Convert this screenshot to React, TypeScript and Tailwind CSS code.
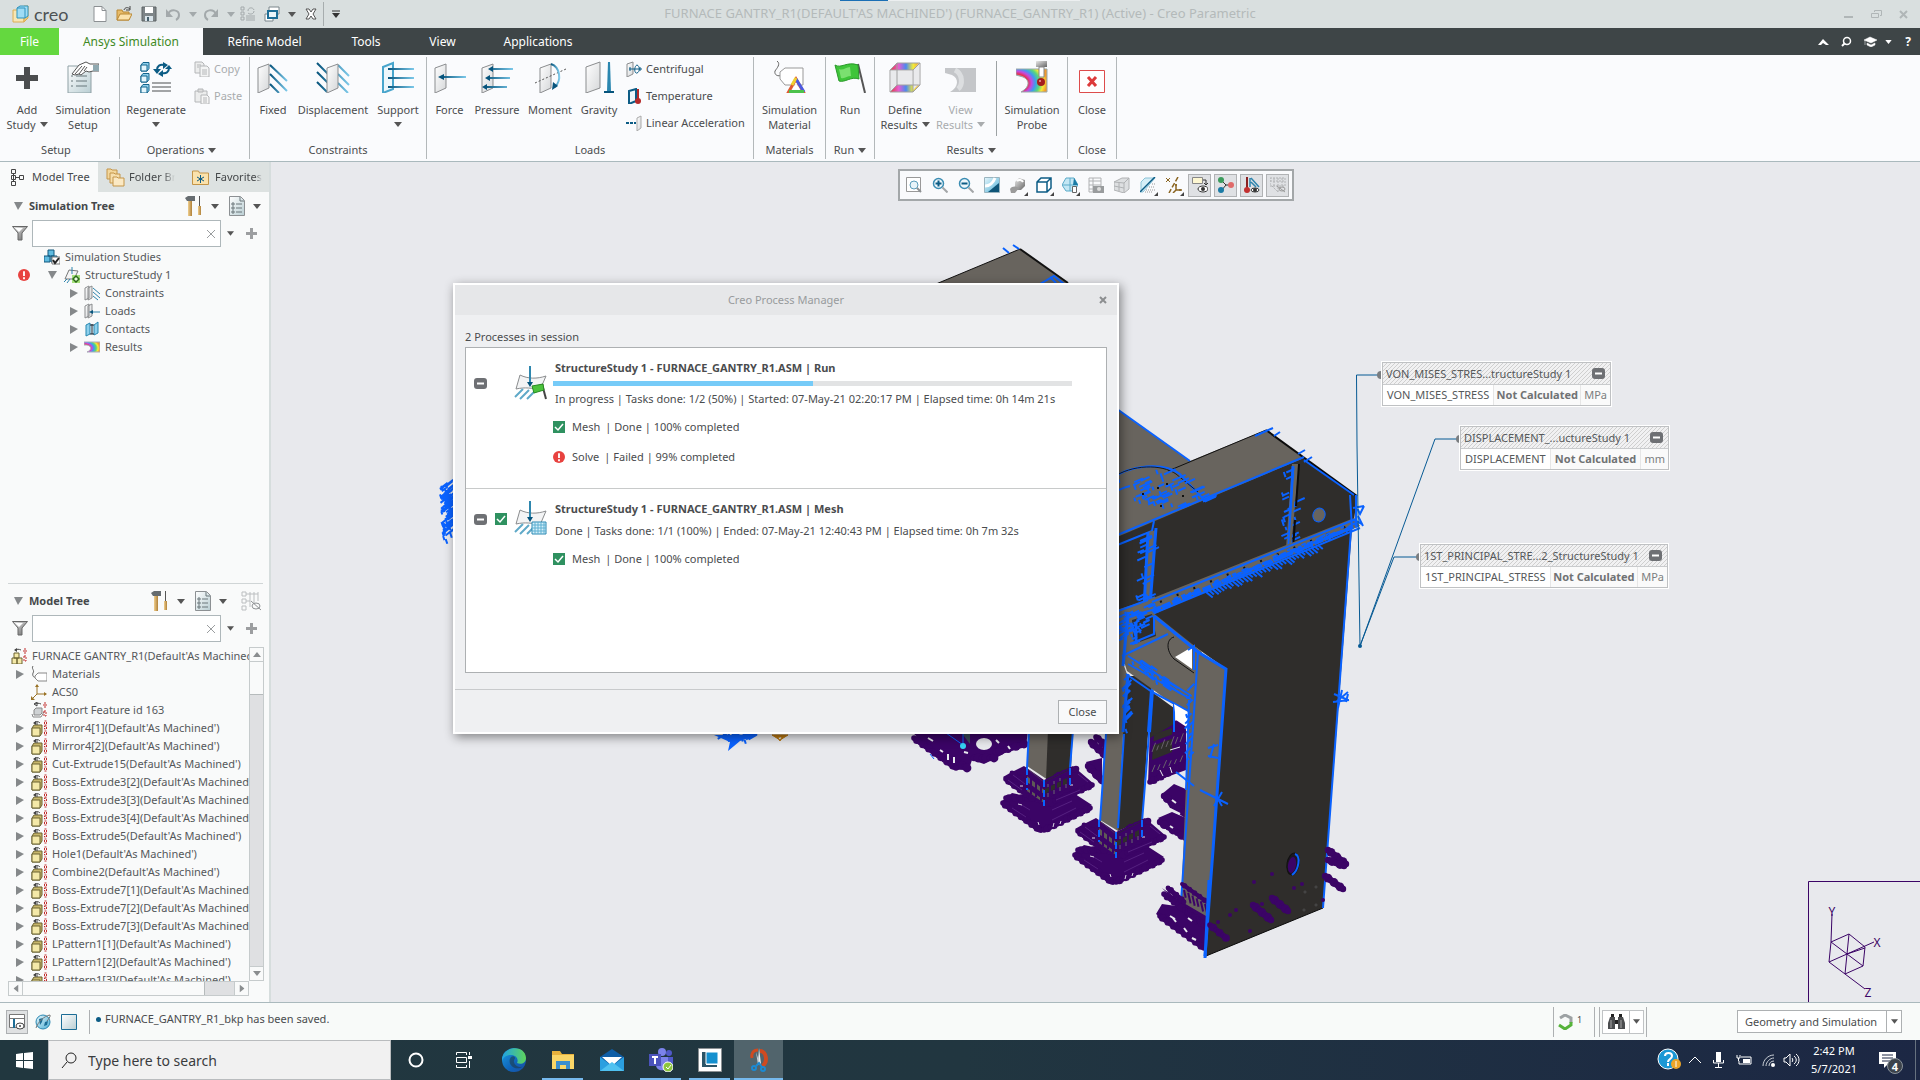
import * as React from "react";

type Pt = [number, number];

const BLUE = "#0a62ff";
const GRAY = "#68645e";
const DARK = "#2f2d2b";
const PURPLE = "#3b0466";

function Icon({ s = 16, w, h, children, className = "" }: any) {
  return (
    <svg
      width={w || s}
      height={h || s}
      viewBox={`0 0 ${w || s} ${h || s}`}
      fill="none"
      className={"shrink-0 " + className}
      aria-hidden="true"
    >
      {children}
    </svg>
  );
}

function Caret({ color = "#555", className = "" }: { color?: string; className?: string }) {
  return (
    <svg width="8" height="5" viewBox="0 0 8 5" className={"inline-block shrink-0 " + className} aria-hidden="true">
      <path d="M0 0h8L4 5z" fill={color} />
    </svg>
  );
}

/* ---------- shared gradients ---------- */

function Defs() {
  return (
    <svg width="0" height="0" className="absolute" aria-hidden="true">
      <defs>
        <linearGradient id="plate" x1="0" y1="0" x2="1" y2="1">
          <stop offset="0" stopColor="#fff" />
          <stop offset="1" stopColor="#d5d7d9" />
        </linearGradient>
        <linearGradient id="doc" x1="0" y1="0" x2="1" y2="1">
          <stop offset="0" stopColor="#fff" />
          <stop offset="1" stopColor="#b9ced3" />
        </linearGradient>
        <linearGradient id="ray" x1="0" y1="0" x2="1" y2="0">
          <stop offset="0" stopColor="#07547c" />
          <stop offset="1" stopColor="#7cc9ea" />
        </linearGradient>
        <linearGradient id="sky" x1="0" y1="0" x2="1" y2="1">
          <stop offset="0" stopColor="#e6f6fc" />
          <stop offset="1" stopColor="#4fb0d6" />
        </linearGradient>
        <linearGradient id="wood" x1="0" y1="0" x2="1" y2="0">
          <stop offset="0" stopColor="#f0cf8e" />
          <stop offset="1" stopColor="#b0813a" />
        </linearGradient>
        <linearGradient id="metal" x1="0" y1="0" x2="1" y2="1">
          <stop offset="0" stopColor="#e8e8e8" />
          <stop offset="1" stopColor="#666" />
        </linearGradient>
        <linearGradient id="rainbow" x1="0" y1="0" x2="1" y2="0">
          <stop offset="0" stopColor="#e23a3a" />
          <stop offset=".3" stopColor="#e65fd0" />
          <stop offset=".55" stopColor="#4a8af0" />
          <stop offset=".8" stopColor="#f3ec3a" />
          <stop offset="1" stopColor="#f0a030" />
        </linearGradient>
        <radialGradient id="fringe" cx="0" cy=".6" r="1">
          <stop offset=".25" stopColor="#7fd6ff" />
          <stop offset=".38" stopColor="#e8304a" />
          <stop offset=".5" stopColor="#c44ae0" />
          <stop offset=".62" stopColor="#3d9bf0" />
          <stop offset=".76" stopColor="#58d77c" />
          <stop offset=".88" stopColor="#f6ea38" />
          <stop offset="1" stopColor="#f39a2e" />
        </radialGradient>
        <linearGradient id="edge" x1="0" y1="0" x2="1" y2="1">
          <stop offset="0" stopColor="#1b9de2" />
          <stop offset=".6" stopColor="#0f62b8" />
          <stop offset="1" stopColor="#1b4fa0" />
        </linearGradient>
        <linearGradient id="edgeTop" x1="0" y1="0" x2="1" y2="0">
          <stop offset="0" stopColor="#1fa2e6" />
          <stop offset="1" stopColor="#5fd45a" />
        </linearGradient>
        <pattern id="hatch" width="4" height="4" patternUnits="userSpaceOnUse">
          <path d="M0 4L4 0" stroke="#cfcfcf" />
        </pattern>
      </defs>
    </svg>
  );
}

/* ---------- ribbon icons, 32px ---------- */

const Plate = ({ x = 0 }: { x?: number }) => (
  <path d={`M${x} 7l11-4v24l-11 5z`} fill="url(#plate)" stroke="#8b8d8f" />
);

const AddIcon = () => (
  <Icon s={32}>
    <path d="M13 6h6v8h8v6h-8v8h-6v-8H5v-6h8z" fill="#4b4d4f" />
  </Icon>
);

const SetupIcon = () => (
  <Icon s={32}>
    <path d="M1 5h23v27H1z" fill="url(#doc)" stroke="#8fa0a5" />
    <path d="M4 15h3M4 20h3M4 25h3" stroke="#67767b" strokeDasharray="2 1" />
    <path d="M9 15h11M9 20h11M9 25h11" stroke="#67767b" />
    <path d="M5 13l7-9 7-3 4 2h9v7h-6l-4 1-3-1-5 4-2-1-4 1z" fill="#fff" stroke="#555" />
    <path d="M8 13l7-8M12 13l6-8M17 10l3-4" stroke="#555" />
    <path d="M26 4h6v6h-6z" fill="#8fa8b0" />
  </Icon>
);

const Cube = ({ x = 0, y = 0 }: { x?: number; y?: number }) => (
  <g transform={`translate(${x} ${y})`}>
    <path d="M0 3l2-2.500h6v6L6 9H0z" fill="#8fd0ec" stroke="#13648c" />
    <path d="M0 3h6v6H0z" fill="#e4f6fd" stroke="#13648c" />
  </g>
);

const RegenIcon = () => (
  <Icon s={32}>
    <Cube x={1} y={1} />
    <Cube x={1} y={12} />
    <Cube x={1} y={23} />
    <path d="M17 9c0-4 3-6 7-5M29 7c0 4-3 6-7 5" stroke="#0c5c85" strokeWidth="2" />
    <path d="M23 1l5 3-5 4zM23 9v7l-5-3zM13 8h8l-4 5zM25 8h7l-3-4z" fill="#0c5c85" />
    <path d="M12 22h19M12 26h19M12 30h19" stroke="#a2a4a6" strokeWidth="2" />
  </Icon>
);

const FixedIcon = () => (
  <Icon s={32}>
    <Plate x={1} />
    <path d="M13 4l17 16M13 13l17 17M13 23l9 9" stroke="url(#ray)" strokeWidth="2" />
  </Icon>
);

const DisplacementIcon = () => (
  <Icon w={34} h={32}>
    <path d="M1 2l12 12M1 11l12 12M1 21l10 10M22 4l11 11M22 13l11 11M22 22l10 10" stroke="url(#ray)" strokeWidth="2" />
    <Plate x={11} />
  </Icon>
);

const SupportIcon = () => (
  <Icon s={32}>
    <path d="M1 6l10-4v26l-10 4z" fill="#eef7fb" stroke="#48a5cc" strokeWidth="2" />
    <path d="M6 7h26v2H6zM6 16h26v2H6zM6 25h26v2H6z" fill="url(#ray)" />
  </Icon>
);

const ForceIcon = () => (
  <Icon s={32}>
    <Plate x={1} />
    <path d="M7 15h25v2H7z" fill="url(#ray)" />
    <path d="M4 16l6-3v6z" fill="#07547c" />
  </Icon>
);

const PressureIcon = () => (
  <Icon s={32}>
    <Plate x={1} />
    <path d="M10 7h22v2H10zM7 16h22v2H7zM4 25h22v2H4z" fill="url(#ray)" />
    <path d="M7 8l5-3v6zM4 17l5-3v6zM1 26l5-3v6z" fill="#07547c" />
  </Icon>
);

const MomentIcon = () => (
  <Icon w={34} h={32}>
    <Plate x={7} />
    <path d="M2 22L33 8" stroke="#555" strokeDasharray="2 2" />
    <path d="M18 3c9 3 11 16 4 23" stroke="url(#ray)" strokeWidth="2" />
    <path d="M19 29l1-8 5 4z" fill="#07547c" />
  </Icon>
);

const GravityIcon = () => (
  <Icon s={32}>
    <path d="M3 6l14-5v26L3 32z" fill="url(#plate)" stroke="#8b8d8f" />
    <path d="M25 1h2l1 29h-4z" fill="#2b87b0" />
    <path d="M21 30h10v2H21z" fill="#07547c" />
  </Icon>
);

const MaterialIcon = () => (
  <Icon s={32}>
    <path d="M3 0c4 3 0 7-2 10-1 4 3 6 7 4" stroke="#666" />
    <path d="M6 11l5-4h18v17H11l-5-6z" fill="#fff" stroke="#999" />
    <path d="M22 18l-8 14h16z" fill="none" stroke="#e05a30" strokeWidth="3" />
    <path d="M22 18l8 13" stroke="#4a5ae0" strokeWidth="3" />
    <path d="M15 30.500h15" stroke="#4cc24c" strokeWidth="3" />
    <path d="M22 17l-4 7" stroke="#f0d030" strokeWidth="3" />
    <path d="M22 22l-3 6h6z" fill="#fff" />
  </Icon>
);

const RunIcon = () => (
  <Icon s={32}>
    <path d="M24 3l7 29" stroke="#555" strokeWidth="2" />
    <path d="M1 4c6 4 12-4 23 0l1 14c-8-3-14 4-20 2z" fill="#3fc53a" stroke="#2a9a2a" />
    <path d="M5 8c4 2 7-2 11-2l1 9c-4 0-6 3-10 2z" fill="#7be070" />
  </Icon>
);

const DefineIcon = () => (
  <Icon s={32}>
    <path d="M1 9l7-7h22l-6 7z" fill="url(#rainbow)" />
    <path d="M1 31l7-7h22l-6 7z" fill="url(#rainbow)" />
    <path d="M2 10h21v14H8l-6 5zM24 9l6-6v20l-6 6z" fill="#e9eaec" />
    <path d="M1 9h23v22H1zM8 2h23v22H8zM1 9l7-7M24 9l7-7M24 31l7-7M1 31l7-7" stroke="#a0a0a0" />
  </Icon>
);

const ViewIcon = () => (
  <Icon s={32}>
    <path d="M0 7h31v24H5c9-5 9-14 2-17L0 12z" fill="#c4c6c9" />
    <path d="M10 9c8 4 8 15 3 19" stroke="#dcdee0" strokeWidth="5" />
  </Icon>
);

const ProbeIcon = () => (
  <Icon s={32}>
    <path d="M0 8h31v23H5c9-5 9-12 2-15L0 14z" fill="url(#fringe)" stroke="#9aa" />
    <path d="M20 0h11v6H20z" fill="url(#metal)" />
    <path d="M23 6h5v10h-5z" fill="#fff" stroke="#888" />
    <circle cx="25" cy="21" r="4" fill="#a51d1d" />
    <circle cx="24" cy="20" r="1" fill="#f0a0a0" />
  </Icon>
);

const CloseIcon = () => (
  <Icon s={32}>
    <path d="M3.500 9.500h25v22h-25z" fill="#fff" stroke="#dd4c4c" />
    <path d="M12 16l8 9M20 16l-8 9" stroke="#dd3b3b" strokeWidth="3" />
  </Icon>
);

const CopyIcon = () => (
  <Icon>
    <path d="M1 1h7l2 2v9H1z" fill="#eceded" stroke="#b4b6b8" />
    <path d="M6 5h7l2 2v9H6z" fill="#f3f4f4" stroke="#b4b6b8" />
    <path d="M8 9h5M8 11h5M8 13h5M3 4h4M3 6h2" stroke="#b4b6b8" />
  </Icon>
);

const PasteIcon = () => (
  <Icon>
    <path d="M1 3h12v11H1z" fill="#eceded" stroke="#b4b6b8" />
    <path d="M4 1h5v3H4z" fill="#ddd" stroke="#b4b6b8" />
    <path d="M7 7h6l2 2v7H7z" fill="#f6f6f6" stroke="#b4b6b8" />
    <path d="M9 10h4M9 12h4M9 14h4" stroke="#b4b6b8" />
  </Icon>
);

/* ---------- ribbon ---------- */

function RibbonButton({ icon, label, second, caret, className, disabled }: any) {
  return (
    <button
      className={
        "flex h-[83px] shrink-0 flex-col items-center pt-1 leading-[15px] " +
        (disabled ? "text-[#a9acae] " : "text-[#4a4c4e] ") +
        className
      }
    >
      {icon}
      <span className="mt-[9px] whitespace-nowrap">{label}</span>
      <span className="flex h-[15px] items-center gap-1 whitespace-nowrap">
        {second}
        {caret && <Caret color={disabled ? "#a9acae" : "#555"} />}
      </span>
    </button>
  );
}

function Group({ label, caret, children, className = "" }: any) {
  return (
    <div className={"flex shrink-0 flex-col border-r border-[#b3b8ba] " + className}>
      <div className="flex">{children}</div>
      <div className="mt-0.5 flex items-center justify-center gap-1 text-[#4a4c4e]">
        {label}
        {caret && <Caret />}
      </div>
    </div>
  );
}

function Ribbon() {
  return (
    <div className="flex h-[107px] shrink-0 border-b border-[#aab9bd] bg-[#fafbfd] py-0.5 text-[11px] leading-4">
      <Group label="Setup" className="pr-[7px]">
        <RibbonButton icon={<AddIcon />} label="Add" second="Study" caret className="w-[54px]" />
        <RibbonButton icon={<SetupIcon />} label="Simulation" second="Setup" className="w-[58px]" />
      </Group>
      <Group label="Operations" caret className="pr-1.5">
        <RibbonButton icon={<RegenIcon />} label="Regenerate" caret className="w-[72px]" />
        <div className="flex w-[51px] flex-col gap-[11px] pt-1 pl-0.5 text-[#a9acae]">
          <button className="flex items-center gap-1">
            <CopyIcon />
            Copy
          </button>
          <button className="flex items-center gap-1">
            <PasteIcon />
            Paste
          </button>
        </div>
      </Group>
      <Group label="Constraints">
        <RibbonButton icon={<FixedIcon />} label="Fixed" className="w-[46px]" />
        <RibbonButton icon={<DisplacementIcon />} label="Displacement" className="w-[74px]" />
        <RibbonButton icon={<SupportIcon />} label="Support" caret className="w-[56px]" />
      </Group>
      <Group label="Loads">
        <RibbonButton icon={<ForceIcon />} label="Force" className="w-[45px]" />
        <RibbonButton icon={<PressureIcon />} label="Pressure" className="w-[50px]" />
        <RibbonButton icon={<MomentIcon />} label="Moment" className="w-[56px]" />
        <RibbonButton icon={<GravityIcon />} label="Gravity" className="w-[42px]" />
        <div className="flex w-[133px] flex-col gap-[11px] pt-1 pl-1.5 text-[#4a4c4e]">
          <button className="flex items-center gap-1 whitespace-nowrap">
            <Icon>
              <path d="M1 3l6-2v12l-6 3z" fill="url(#plate)" stroke="#8b8d8f" />
              <path d="M3 8h13" stroke="#0c5c85" />
              <path d="M11 4c3 1 3 7 0 8s-3-7 0-8z" stroke="#0c5c85" />
              <path d="M4 6v4M14 6v4" stroke="#0c5c85" />
            </Icon>
            Centrifugal
          </button>
          <button className="flex items-center gap-1 whitespace-nowrap">
            <Icon>
              <path d="M3 3l7-2v12l-7 3z" fill="#eef7fb" stroke="#0c5c85" strokeWidth="2" />
              <path d="M12 1v11" stroke="#b52a2a" strokeWidth="2" />
              <circle cx="12" cy="13" r="3" fill="#b52a2a" />
            </Icon>
            Temperature
          </button>
          <button className="flex items-center gap-1 whitespace-nowrap">
            <Icon>
              <path d="M0 8h3M4 8h3M8 8h2" stroke="#0c5c85" strokeWidth="2" />
              <path d="M11 3l4-2v12l-4 3z" fill="url(#plate)" stroke="#aaa" />
            </Icon>
            Linear Acceleration
          </button>
        </div>
      </Group>
      <Group label="Materials">
        <RibbonButton icon={<MaterialIcon />} label="Simulation" second="Material" className="w-[71px]" />
      </Group>
      <Group label="Run" caret>
        <RibbonButton icon={<RunIcon />} label="Run" className="w-[48px]" />
      </Group>
      <Group label="Results" caret>
        <RibbonButton icon={<DefineIcon />} label="Define" second="Results" caret className="w-[60px]" />
        <RibbonButton icon={<ViewIcon />} label="View" second="Results" caret disabled className="w-[51px]" />
        <div className="my-1 ml-2.5 w-px bg-[#9da2a4]" />
        <RibbonButton icon={<ProbeIcon />} label="Simulation" second="Probe" className="w-[70px]" />
      </Group>
      <Group label="Close">
        <RibbonButton icon={<CloseIcon />} label="Close" className="w-[48px]" />
      </Group>
    </div>
  );
}

/* ---------- title bar ---------- */

function TitleBar() {
  return (
    <header className="relative flex h-7 shrink-0 items-center bg-[#d9dfdf] text-[#b4baba]">
      <div className="absolute top-0 left-1/2 flex -translate-x-[120px]">
        <div className="h-px w-12 bg-[#1a6fb5]" />
        <div className="h-px w-48 bg-[#eceff0]" />
      </div>
      <Icon w={18} h={18} className="ml-3">
        <path d="M1 5h11v12H1z" fill="#f7e6b4" stroke="#dcae55" />
        <path d="M12 17l4-4V1h-4z" fill="#efc878" stroke="#dcae55" />
        <path d="M5 3l3-2h8v10l-3 2H5z" fill="#9fdcf5" stroke="#2f93bd" />
        <path d="M5 3h8v10" stroke="#2f93bd" />
      </Icon>
      <span className="ml-1 w-[42px] font-['Lato'] text-[18px] leading-5 text-[#4d5254]">creo</span>
      <div className="ml-4 flex items-center">
        <button aria-label="New" className="w-[24px]">
          <Icon>
            <path d="M2 .5h8l4 4v11H2z" fill="#fff" stroke="#8c9093" />
            <path d="M10 .5v4h4" stroke="#8c9093" />
          </Icon>
        </button>
        <button aria-label="Open" className="w-[25px]">
          <Icon>
            <path d="M1 14V4h5l1 2h6v8z" fill="#e7bb69" stroke="#b98732" />
            <path d="M1 14l3-6h12l-3 6z" fill="#fbe2ac" stroke="#b98732" />
            <path d="M8 4c1-3 4-3 6-1M14 0v4h-4" stroke="#444" />
          </Icon>
        </button>
        <button aria-label="Save" className="w-[24px]">
          <Icon>
            <path d="M1 1h14v14H1z" fill="#7e8588" stroke="#5d6264" />
            <path d="M4 1h8v6H4z" fill="#fff" />
            <path d="M4 10h8v5H4z" fill="#d9e4ea" />
            <path d="M6 11h2v4H6z" fill="#47606c" />
          </Icon>
        </button>
        <button aria-label="Undo" className="flex w-[38px] items-center gap-2">
          <Icon>
            <path d="M3 8c3-6 11-4 11 1 0 2-1 4-3 5" stroke="#a3a9ab" strokeWidth="2" />
            <path d="M1 3v8h7z" fill="#a3a9ab" />
          </Icon>
          <Caret color="#a3a9ab" />
        </button>
        <button aria-label="Redo" className="flex w-[37px] items-center gap-2">
          <Icon>
            <path d="M13 8C10 2 2 4 2 9c0 2 1 4 3 5" stroke="#a3a9ab" strokeWidth="2" />
            <path d="M15 3v8H8z" fill="#a3a9ab" />
          </Icon>
          <Caret color="#a3a9ab" />
        </button>
        <button aria-label="Regenerate" className="w-[24px]">
          <Icon>
            <path d="M1 1h3v3H1zM1 6h3v3H1zM1 11h3v3H1zM6 10h9M6 12h9M6 14h9M8 5c0-4 5-4 6-1M14 5c0 3-4 4-6 2" stroke="#a3a9ab" />
          </Icon>
        </button>
        <button aria-label="Windows" className="flex w-[41px] items-center gap-2">
          <Icon>
            <path d="M5 1h10v7H5zM1 8h8v7H1z" fill="#fff" stroke="#7b868b" />
            <path d="M4 5h9v7H4z" fill="#e9f5fa" stroke="#1c6d96" strokeWidth="2" />
          </Icon>
          <Caret />
        </button>
        <button aria-label="Close window">
          <Icon s={12}>
            <path d="M1 1h3l2 3 2-3h3L8 6l3 5H8L6 8l-2 3H1l3-5z" fill="#fff" stroke="#555" />
          </Icon>
        </button>
        <div className="ml-1.5 h-6 w-px bg-[#a7adae]" />
        <button aria-label="Customize" className="ml-2">
          <Icon w={8} h={8}>
            <path d="M0 1h8" stroke="#333" />
            <path d="M0 3h8L4 8z" fill="#333" />
          </Icon>
        </button>
      </div>
      <h1 className="absolute left-1/2 -translate-x-1/2 text-[13px] whitespace-nowrap">
        FURNACE GANTRY_R1(DEFAULT'AS MACHINED') (FURNACE_GANTRY_R1) (Active) - Creo Parametric
      </h1>
      <div className="ml-auto flex items-center gap-[17px] pr-3">
        <button aria-label="Minimize">
          <Icon s={10}>
            <path d="M0 8h9" stroke="#b0b6b7" strokeWidth="2" />
          </Icon>
        </button>
        <button aria-label="Restore">
          <Icon s={11}>
            <path d="M3.500 3V1.500h7v5H9M.5 4.500h7v4h-7z" stroke="#b0b6b7" />
          </Icon>
        </button>
        <button aria-label="Exit">
          <Icon s={9}>
            <path d="M1 1l7 7M8 1L1 8" stroke="#b0b6b7" strokeWidth="2" />
          </Icon>
        </button>
      </div>
    </header>
  );
}

function TabBar() {
  return (
    <nav className="flex h-[27px] shrink-0 bg-[#3e4547] text-[12px] text-white">
      <button className="w-[59px] bg-[#64d83f]">File</button>
      <button className="w-[144px] bg-[#fafbfd] text-[#3f8a1f]">Ansys Simulation</button>
      <button className="w-[123px]">Refine Model</button>
      <button className="w-[80px]">Tools</button>
      <button className="w-[73px]">View</button>
      <button className="w-[118px]">Applications</button>
      <div className="ml-auto flex items-center pr-2">
        <button aria-label="Collapse ribbon" className="mr-3">
          <Icon w={11} h={6}>
            <path d="M0 6l5-6 6 6H8L5 4 3 6z" fill="#fff" />
          </Icon>
        </button>
        <button aria-label="Search" className="mr-3">
          <Icon s={11}>
            <circle cx="6" cy="5" r="3.500" stroke="#fff" strokeWidth="1.500" />
            <path d="M4 7l-3 3" stroke="#fff" strokeWidth="2" />
          </Icon>
        </button>
        <button aria-label="Learn" className="mr-3 flex items-center gap-2">
          <Icon w={13} h={11}>
            <path d="M0 4l6-3 7 3-6 3zM3 7l4 2 4-2v2l-4 2-4-2zM1 4v5" fill="#fff" stroke="#fff" strokeWidth=".5" />
          </Icon>
          <Caret color="#fff" className="h-1 w-[7px]" />
        </button>
        <button className="w-2 font-bold">?</button>
      </div>
    </nav>
  );
}

/* ---------- left trees ---------- */

const PartIcon = () => (
  <Icon w={16} h={17}>
    <path d="M1 8l2-3h8v8l-2 3H1z" fill="#c6b56a" stroke="#6a6330" />
    <path d="M1 8h8v8H1z" fill="#f4e9a8" stroke="#6a6330" />
    <path d="M3 3c2-2 4-2 6 0M6 2v3" stroke="#444" />
    <path d="M2 3l3-2v4z" fill="#444" />
    <path d="M13.500 1h2v4h-2zM13.500 6h2v3h-2zM13.500 11h2v4h-2z" stroke="#c22c2c" strokeDasharray="2 1" />
  </Icon>
);

const AsmIcon = () => (
  <Icon>
    <path d="M1 10h5v6H1zM6 10h5v6H6zM3 5h5v5H3z" fill="#f4e9a8" stroke="#6a6330" />
    <path d="M4 2c2-1 4-1 6 0" stroke="#444" />
    <path d="M3 2l3-2v4z" fill="#444" />
    <path d="M13 1h2v4h-2zM13 8h2v5h-2z" stroke="#c22c2c" strokeDasharray="2 1" />
  </Icon>
);

const TagIcon = () => (
  <Icon>
    <path d="M2 0c-2 3 2 4 0 7-1 3 1 5 3 4" stroke="#666" />
    <path d="M4 10l3-3h9v8H7l-3-3z" fill="#fff" stroke="#888" />
  </Icon>
);

const CsysIcon = () => (
  <Icon>
    <path d="M6 1v9h9M6 10l-5 5" stroke="#9a7326" />
    <path d="M4 3l2-3 2 3zM13 8l3 2-3 2zM0 16v-4l4 4z" fill="#9a7326" />
  </Icon>
);

const ImportIcon = () => (
  <Icon>
    <path d="M3 8l2-2h6v5l-2 2H3z" fill="#cfd2d4" stroke="#888" />
    <path d="M1 12l1 3h8l3-5" stroke="#888" />
    <path d="M4 2c2-1 4-1 6 0M3 2l3-2v4z" stroke="#444" />
    <path d="M13 1h2v4h-2zM13 9h2v5h-2z" stroke="#c22c2c" strokeDasharray="2 1" />
  </Icon>
);

const StudiesIcon = () => (
  <Icon>
    <path d="M4 1h6v6H4zM0 7h6v6H0zM7 7h6v6H7z" fill="#5fbbe0" stroke="#11577c" />
    <path d="M8 8h8v7H8z" fill="#fff" stroke="#777" />
    <path d="M9 11l2 3 4-5" stroke="#222" strokeWidth="2" />
  </Icon>
);

const StudyIcon = () => (
  <Icon>
    <path d="M1 12L5 3l9 1-4 8z" fill="#f4f4f4" stroke="#777" />
    <path d="M0 15l3-3M3 16l3-4M8 0v7" stroke="#2f85ad" />
    <path d="M8 8h8v8H8z" fill="#a6e07c" />
    <path d="M12 9l3 3-3 3-3-3z" stroke="#2b6a18" strokeWidth="1.500" fill="#e9f8df" />
  </Icon>
);

const PlatesIcon = ({ kind }: { kind: string }) => (
  <Icon>
    <path d="M1 3l4-2v12l-4 2zM4 3l4-2v12l-4 2z" fill="url(#plate)" stroke="#8b8d8f" />
    {kind === "c" ? (
      <path d="M9 3l7 6M9 7l7 6M9 11l5 4" stroke="#2f85ad" />
    ) : (
      <>
        <path d="M7 9h9" stroke="#2f85ad" />
        <path d="M5 9l4-2v4z" fill="#07547c" />
      </>
    )}
  </Icon>
);

const ContactsIcon = () => (
  <Icon>
    <path d="M2 4l4-2v11l-4 2zM10 4l4-3v11l-4 2z" fill="#8ed0ec" stroke="#2787b0" />
    <path d="M8 3v10M6 4h4M6 13h4" stroke="#123" />
  </Icon>
);

const FringeIcon = () => (
  <Icon>
    <path d="M0 3h16v10H3c5-2 5-6 0-7H0z" fill="url(#fringe)" stroke="#aab" />
  </Icon>
);

const ErrorIcon = ({ s = 12 }: { s?: number }) => (
  <svg width={s} height={s} viewBox="0 0 13 13" className="shrink-0" aria-hidden="true">
    <circle cx="6.500" cy="6.500" r="6.500" fill="#e8423f" />
    <path d="M5.500 2.500h2v5h-2zM5.500 9h2v2h-2z" fill="#fff" />
  </svg>
);

const Arrow = ({ down = false }: { down?: boolean }) =>
  down ? (
    <Icon w={9} h={8}>
      <path d="M0 0h9L4 8z" fill="#85888a" />
    </Icon>
  ) : (
    <Icon w={8} h={9}>
      <path d="M0 0l8 4-8 5z" fill="#85888a" />
    </Icon>
  );

function PanelHeader({ title, extra }: { title: string; extra?: boolean }) {
  return (
    <div className="flex h-[28px] items-center pl-3.5">
      <button className="flex items-center gap-1.5 font-bold text-[#45484a]">
        <Arrow down />
        {title}
      </button>
      <div className="ml-auto flex items-center pr-2">
        <button aria-label="Settings" className="mr-2.5 flex items-center gap-[9px]">
          <Icon w={17} h={20}>
            <path d="M3 5h4v15H3z" fill="url(#wood)" />
            <path d="M0 2l3-2h7v5H2z" fill="#666c70" />
            <path d="M14 0h1v10h-1z" fill="#555" />
            <path d="M13 10h3v9h-3z" fill="url(#wood)" />
          </Icon>
          <Caret />
        </button>
        <button aria-label="Show" className="flex items-center gap-2">
          <Icon w={16} h={20}>
            <path d="M.5.5h11l4 4v15H.5z" fill="url(#doc)" stroke="#8c9093" />
            <path d="M3 7h2v2H3zM3 11h2v2H3zM3 15h2v2H3zM7 8h6M7 12h6M7 16h6M11 1v4h4" stroke="#6b777b" />
          </Icon>
          <Caret />
        </button>
        {extra && (
          <button aria-label="Hide tree" className="ml-3.5">
            <Icon s={20}>
              <path d="M1 1h4v4H1zM1 8h4v4H1zM1 15h4v4H1zM9 1v15M13 1v11M17 1v9M5 10h4M5 3h12" stroke="#bbbec0" />
              <ellipse cx="15" cy="15" rx="4" ry="3" stroke="#8f9295" />
              <path d="M10 10l10 9" stroke="#8f9295" />
            </Icon>
          </button>
        )}
      </div>
    </div>
  );
}

function FilterRow({ name }: { name: string }) {
  return (
    <div className="flex h-[27px] items-center pl-3">
      <Icon w={16} h={15}>
        <path d="M.5.5h15L10 7v7H6V7z" fill="url(#metal)" stroke="#666" />
        <path d="M3 2h8L7 6z" fill="#fff" />
      </Icon>
      <label className="relative ml-1 flex h-full w-[189px]">
        <input aria-label={name} className="w-full border border-[#aeb7ba] bg-white pr-5 pl-1 outline-none" />
        <Icon s={8} className="absolute top-[10px] right-1.5">
          <path d="M0 0l8 8M8 0L0 8" stroke="#9a9d9f" />
        </Icon>
      </label>
      <button aria-label="Filter options" className="ml-1.5 flex">
        <Caret className="w-[7px]" />
      </button>
      <button aria-label="Add filter" className="ml-3">
        <Icon s={11}>
          <path d="M4 0h3v4h4v3H7v4H4V7H0V4h4z" fill="#9c9ea0" />
        </Icon>
      </button>
    </div>
  );
}

const studyChildren = [
  { label: "Constraints", icon: <PlatesIcon kind="c" /> },
  { label: "Loads", icon: <PlatesIcon kind="l" /> },
  { label: "Contacts", icon: <ContactsIcon /> },
  { label: "Results", icon: <FringeIcon /> },
];

const parts = [
  "Mirror4[1](Default'As Machined')",
  "Mirror4[2](Default'As Machined')",
  "Cut-Extrude15(Default'As Machined')",
  "Boss-Extrude3[2](Default'As Machined')",
  "Boss-Extrude3[3](Default'As Machined')",
  "Boss-Extrude3[4](Default'As Machined')",
  "Boss-Extrude5(Default'As Machined')",
  "Hole1(Default'As Machined')",
  "Combine2(Default'As Machined')",
  "Boss-Extrude7[1](Default'As Machined')",
  "Boss-Extrude7[2](Default'As Machined')",
  "Boss-Extrude7[3](Default'As Machined')",
  "LPattern1[1](Default'As Machined')",
  "LPattern1[2](Default'As Machined')",
  "LPattern1[3](Default'As Machined')",
];

function TreeRow({ icon, label, arrow = true }: any) {
  return (
    <li className="flex h-[18px] items-center pl-4 whitespace-nowrap">
      <span className="flex w-[15px] shrink-0">{arrow && <Arrow />}</span>
      {icon}
      <span className="ml-[5px]">{label}</span>
    </li>
  );
}

function Sidebar() {
  return (
    <aside className="flex w-[271px] shrink-0 flex-col border-r-2 border-[#d6dddd] bg-[#f9fafa] text-[11px] leading-[18px] text-[#55585a]">
      <div className="flex h-[30px] shrink-0 overflow-hidden bg-[#dde2e1] text-[#45484a]">
        <button className="flex w-[98px] items-center gap-2 bg-[#f9fafa] pl-2.5">
          <Icon w={14} h={19}>
            <path d="M1.500 1.500h4v4h-4zM1.500 7.500h4v4h-4zM1.500 13.500h4v4h-4zM9.500 7.500h4v4h-4zM5.500 9.500h4M3.500 5.500v8" stroke="#444" />
          </Icon>
          Model Tree
        </button>
        <button className="flex w-[86px] items-center gap-1 overflow-hidden pl-2 whitespace-nowrap">
          <Icon w={19} h={19}>
            <path d="M1 3V1h4l1 1h5v9H1z" fill="#f3d79c" stroke="#c49548" />
            <path d="M4 7V5h4l1 1h5v9H4z" fill="#f6dfae" stroke="#c49548" />
            <path d="M7 11V9h4l1 1h6v8H7z" fill="#fbe9c4" stroke="#c49548" />
          </Icon>
          <span className="w-[46px] overflow-hidden mask-r-from-75%">Folder Browser</span>
        </button>
        <button className="flex items-center gap-1.5 overflow-hidden pl-2 whitespace-nowrap">
          <Icon w={17} h={15}>
            <path d="M.5 14.500V1h6l1 2h9v11.500z" fill="#fbe2ac" stroke="#c49548" />
            <path d="M8.500 5v8M5 7l7 4M12 7l-7 4" stroke="#0c5c85" />
          </Icon>
          <span className="mask-r-from-85%">Favorites</span>
        </button>
      </div>

      <section className="min-h-0 flex-[391_1_0%] overflow-hidden">
        <PanelHeader title="Simulation Tree" />
        <FilterRow name="Filter simulation tree" />
        <ul className="mt-px">
          <li className="flex h-[18px] items-center gap-[5px] pl-11">
            <StudiesIcon />
            Simulation Studies
          </li>
          <li className="flex h-[18px] items-center pl-[18px]">
            <ErrorIcon />
            <span className="mr-[7px] ml-[18px]">
              <Arrow down />
            </span>
            <StudyIcon />
            <span className="ml-[5px]">StructureStudy 1</span>
          </li>
          {studyChildren.map((c) => (
            <li key={c.label} className="flex h-[18px] items-center pl-[70px]">
              <Arrow />
              <span className="mr-[5px] ml-1.5">{c.icon}</span>
              {c.label}
            </li>
          ))}
        </ul>
      </section>

      <section className="flex min-h-0 flex-[419_1_0%] flex-col overflow-hidden">
        <div className="mr-1.5 ml-2 h-px shrink-0 bg-[#d0d5d6]" />
        <div className="shrink-0 pt-[3px]">
          <PanelHeader title="Model Tree" extra />
          <FilterRow name="Filter model tree" />
        </div>
        <div className="mt-[5px] mr-[5px] flex min-h-0 flex-1">
          <ul className="min-w-0 flex-1 overflow-hidden">
            <li className="flex h-[18px] items-center gap-[5px] pl-[11px] whitespace-nowrap">
              <AsmIcon />
              FURNACE GANTRY_R1(Default'As Machined')
            </li>
            <TreeRow icon={<TagIcon />} label="Materials" />
            <TreeRow icon={<CsysIcon />} label="ACS0" arrow={false} />
            <TreeRow icon={<ImportIcon />} label="Import Feature id 163" arrow={false} />
            {parts.map((p) => (
              <TreeRow key={p} icon={<PartIcon />} label={p} />
            ))}
          </ul>
          <div className="flex w-[15px] shrink-0 flex-col border border-[#c6cbcc] bg-[#dfe0e2]">
            <button aria-label="Scroll up" className="flex h-[14px] items-center justify-center border-b border-[#c6cbcc] bg-[#f9fafa]">
              <Caret color="#8a8d8f" className="rotate-180" />
            </button>
            <div className="h-[33px] border-b border-[#b6bbbc] bg-[#f9fafa]" />
            <button aria-label="Scroll down" className="mt-auto flex h-[14px] items-center justify-center border-t border-[#c6cbcc] bg-[#f9fafa]">
              <Caret color="#8a8d8f" />
            </button>
          </div>
        </div>
        <div className="mr-5 mb-1.5 ml-2 flex h-[15px] shrink-0 border border-[#c6cbcc] bg-[#dfe0e2]">
          <button aria-label="Scroll left" className="flex w-[14px] items-center justify-center border-r border-[#c6cbcc] bg-[#f9fafa]">
            <Caret color="#8a8d8f" className="rotate-90" />
          </button>
          <div className="w-[182px] border-r border-[#b6bbbc] bg-[#f9fafa]" />
          <button aria-label="Scroll right" className="ml-auto flex w-[14px] items-center justify-center border-l border-[#c6cbcc] bg-[#f9fafa]">
            <Caret color="#8a8d8f" className="-rotate-90" />
          </button>
        </div>
      </section>
    </aside>
  );
}

/* ---------- 3D model ---------- */

let seed = 7;
function rnd() {
  seed = (seed * 16807) % 2147483647;
  return seed / 2147483647;
}

// short strokes scattered round a segment
function scatter(a: Pt, b: Pt, n: number, spread: number, len: number, slope = -0.45) {
  let d = "";
  for (let i = 0; i < n; i++) {
    const t = rnd();
    const x = a[0] + (b[0] - a[0]) * t + (rnd() - 0.5) * spread;
    const y = a[1] + (b[1] - a[1]) * t + (rnd() - 0.5) * spread * 0.6;
    const l = len * (0.5 + rnd() * 0.5);
    const s = rnd() > 0.25 ? slope : 2;
    const dx = s === 2 ? l * 0.2 : l;
    d += `M${x.toFixed(1)} ${y.toFixed(1)}l${dx.toFixed(1)} ${(s === 2 ? l * 0.6 : l * s).toFixed(1)}`;
  }
  return d;
}

// evenly spaced strokes along a segment
function comb(a: Pt, b: Pt, n: number, dx: number, dy: number) {
  let d = "";
  for (let i = 0; i <= n; i++) {
    const t = i / n;
    const k = 0.6 + rnd() * 0.6;
    d += `M${(a[0] + (b[0] - a[0]) * t).toFixed(1)} ${(a[1] + (b[1] - a[1]) * t).toFixed(1)}l${(dx * k).toFixed(1)} ${(dy * k).toFixed(1)}`;
  }
  return d;
}

const details = {
  arc: scatter([1130, 488], [1170, 500], 46, 36, 10),
  arc2: scatter([1160, 470], [1204, 502], 14, 8, 14),
  rail: comb([1206, 592], [1318, 545], 34, 6, 5),
  rail2: scatter([1150, 612], [1356, 524], 110, 7, 6),
  post: scatter([1287, 468], [1288, 545], 26, 14, 11),
  left: scatter([1144, 540], [1143, 606], 24, 14, 12),
  joint: scatter([1120, 640], [1136, 612], 60, 26, 9),
  beam: scatter([1132, 655], [1170, 688], 34, 12, 9, 0.7),
  side: scatter([1124, 680], [1124, 730], 26, 4, 8, -1),
  leg: scatter([1187, 690], [1187, 770], 16, 5, 7, -1),
  far: scatter([444, 486], [446, 538], 90, 9, 9, -0.8),
  floor: scatter([718, 736], [748, 737], 26, 10, 12, -0.6),
};

function Rollers({ pts, n = 12, w = 6 }: { pts: [Pt, Pt]; n?: number; w?: number }) {
  const [a, b] = pts;
  const dots = [];
  for (let i = 0; i <= n; i++) {
    const t = i / n;
    dots.push(
      <circle key={i} cx={a[0] + (b[0] - a[0]) * t} cy={a[1] + (b[1] - a[1]) * t} r={w * (i % 2 ? 0.55 : 0.4)} />
    );
  }
  return (
    <g fill={PURPLE}>
      <path d={`M${a[0]} ${a[1]}L${b[0]} ${b[1]}`} stroke={PURPLE} strokeWidth={w * 0.75} />
      {dots}
    </g>
  );
}

// pad of constraint glyphs under a leg, origin at the leg's lower corner
function Foot({ x, y }: { x: number; y: number }) {
  return (
    <g transform={`translate(${x} ${y})`}>
      <path d="M-43 22L-32 13-14 17-6 22 10 22 31 14 48 25-3 53z" fill={PURPLE} />
      <path d="M-41-3L-34-7-20-14 0 0 29-14 50 4 46 9 2 26-12 20z" fill={PURPLE} />
      <Rollers pts={[[-41, 23], [-4, 50]]} n={14} w={7} />
      <Rollers pts={[[0, 50], [46, 28]]} n={14} w={7} />
      <Rollers pts={[[-38, 18], [-16, 18]]} n={7} w={7} />
      <Rollers pts={[[-38, -1], [-12, 18]]} n={9} w={7} />
      <Rollers pts={[[4, 24], [48, 5]]} n={12} w={7} />
      <Rollers pts={[[-32, -7], [-10, 8]]} n={8} w={6} />
      <Rollers pts={[[12, -4], [32, -11]]} n={7} w={6} />
      <path d="M-17-12L0 2v21l-17-12z" fill="#5f5a56" />
      <path d="M0 2l26-13V6L0 20z" fill={DARK} />
      <path d="M-20-10L0 6 28-8" stroke={PURPLE} strokeWidth="6" />
      <path d="M-17 5L0 17 28 4" stroke={PURPLE} strokeWidth="5" />
      <path d="M-13-4v18M-8-1v18M-3 3v18M6 0v17M12-3v17M18-6v17M24-8v17" stroke={PURPLE} strokeWidth="2" />
      <path d="M4 13v4M10 10v4M16 7v4M22 4v4M4 4v3M10 1v3M16-2v3" stroke="#6b6570" />
      <path d="M-36 0l14 10M-31-5l12 9M-32 28l14 9M-24 24l10 6M8 30l20-9M8 40l24-12M12 20l24-10M34-6l10 8" stroke="#552080" />
      <path d="M-24 6h3M-26 24l4 1M26 5h3M-6 42l1 3M9 47l1-4M16 44l1-3" stroke="#dcd8e4" strokeWidth="1" />
      <path d="M-17-12V10M0 0v26M26-12v20" stroke={BLUE} strokeWidth="2" strokeDasharray="7 3" />
    </g>
  );
}

function Scene() {
  return (
    <svg
      viewBox="271 162 1649 840"
      preserveAspectRatio="xMinYMin meet"
      className="absolute inset-0 h-full w-full"
      fill="none"
      aria-hidden="true"
    >
      {/* far roof */}
      <path d="M936 284l84-35 48 34-20 20z" fill={GRAY} />
      <path d="M936 284l84-35" stroke="#111" />
      <path d="M1020 249l48 34" stroke="#111" strokeWidth="2" />
      <path d="M1003 248l6 5M1013 245l6 4M1040 284l14-8 10 8M1050 277l6 6" stroke={BLUE} strokeWidth="2" />

      {/* far side marks */}
      <path d={details.far} stroke={BLUE} strokeWidth="2" />
      <path d={details.floor} stroke={BLUE} strokeWidth="2" />
      <path d="M714 735h44l-18 6-12 10 2-9z" fill={BLUE} />
      <path d="M772 735h16l-8 5zM778 738l2 3 2-4" fill="#b9770e" stroke="#b9770e" />

      {/* back feet */}
      <g>
        <path d="M910 730h118l-2 17-14 2-16 9-12 6-12-4-3 9-12 1-20-14z" fill={PURPLE} />
        <Rollers pts={[[914, 738], [956, 768]]} n={14} w={7} />
        <Rollers pts={[[960, 764], [967, 768]]} n={3} w={8} />
        <Rollers pts={[[974, 758], [994, 758]]} n={5} w={8} />
        <Rollers pts={[[996, 752], [1024, 744]]} n={7} w={8} />
        <ellipse cx="984" cy="744" rx="8" ry="6" fill="#e8e9ed" />
        <path d="M928 738l5 3M940 750l3 2M948 754v6M954 757v6M996 740l3 3M1008 746l2 3M964 752l4 1" stroke="#e8e9ed" strokeWidth="2" />
        <path d="M960 731l10 13v-13z" fill="#3a4c58" />
        <path d="M946 733l17 12v-12M930 754l4 5" stroke={BLUE} strokeWidth="1" />
        <circle cx="963" cy="746" r="3" fill="#35d3f2" />
      </g>
      <g>
        <path d="M1150 728l36-10v52l-38 14z" fill={PURPLE} />
        <Rollers pts={[[1150, 782], [1182, 766]]} n={9} w={7} />
        <Rollers pts={[[1158, 730], [1184, 722]]} n={7} w={7} />
        <path d="M1154 734l18-6v24l-20 8z" fill={DARK} />
        <path d="M1152 744l32-12" stroke={PURPLE} strokeWidth="4" />
        <Rollers pts={[[1091, 742], [1104, 754]]} n={5} w={8} />
        <Rollers pts={[[1096, 737], [1106, 746]]} n={5} w={7} />
        <path d="M1086 762l16-4v26l-8-6z" fill={PURPLE} />
        <Rollers pts={[[1088, 766], [1102, 780]]} n={5} w={8} />
        <path d={comb([1152, 752], [1180, 742], 6, 3, -8) + comb([1152, 772], [1180, 762], 5, 3, -7)} stroke="#68606c" />
        <path d="M1170 750l10-3M1160 770l3 6M1170 767l2 6" stroke="#e8e9ed" />
      </g>
      <g>
        <path d="M1162 794l12-10 14 6v30l-18-12z" fill={PURPLE} />
        <Rollers pts={[[1164, 796], [1184, 812]]} n={6} w={8} />
        <path d="M1158 818l14-6 14 6v22z" fill={PURPLE} />
        <Rollers pts={[[1160, 822], [1186, 838]]} n={6} w={8} />
        <path d="M1172 800l4 3M1170 826l3 2M1170 809l10 5" stroke="#e8e9ed" strokeWidth="2" />
      </g>

      {/* legs */}
      <path d="M1029 730h19v50l-21-14z" fill={GRAY} />
      <path d="M1048 730h25l-2 38-25 12z" fill={DARK} />
      <path d="M1029 730l-2 38M1073 730l-3 38" stroke={BLUE} strokeWidth="2" />
      <Foot x={1044} y={780} />
      <path d="M1126 676h26l-10 145-24 10z" fill={DARK} />
      <path d="M1120 655l8 22-5 57-5 97-18-11 6-86z" fill={GRAY} />
      <path d="M1152 692l22 16v16l-24 14z" fill={DARK} />
      <path d="M1106 734l-6 88M1124 734l-6 94M1152 688l-3 46-7 88M1174 702v30" stroke={BLUE} strokeWidth="2" />
      <path d="M1152 690l-3 42" stroke={BLUE} strokeWidth="4" />
      <Foot x={1116} y={832} />

      {/* deck */}
      <path d="M1110 404l80 57 76-31 40 29-187 79z" fill={GRAY} />
      <path d="M1110 404l80 57" stroke={BLUE} strokeWidth="2" />
      <path d="M1168 471l98-41" stroke="#111" />
      <path d="M1110 540l194-82 53 38-4 33-200 85-43 10z" fill={DARK} />
      <path d="M1266 430l91 66" stroke="#0b0b0b" strokeWidth="2" />
      <path d="M1110 538l194-81M1110 548l42-17 2-10M1304 460l50 35" stroke={BLUE} strokeWidth="2" />
      <path d="M1110 480c20-16 54-18 70-6l25 27M1110 496c6-6 12-8 20-10" stroke={BLUE} strokeWidth="2" />
      <path d="M1112 478c20-14 50-14 64-4l22 18" stroke="#1a1a1a" />
      <path d={details.arc} stroke={BLUE} strokeWidth="2" />
      <path d={details.arc2} stroke={BLUE} strokeWidth="2" />
      <path d="M1157 488h2M1166 484h2M1182 496h2M1142 494h2M1160 506h2" stroke="#111" strokeWidth="2" />
      {/* posts */}
      <path d="M1292 464h7l-8 84h-5z" fill={GRAY} />
      <path d={details.post} stroke={BLUE} strokeWidth="2" />
      <path d="M1293 466l-4 80" stroke={BLUE} strokeWidth="3" />
      <path d="M1299 464l-3 42M1295 520l-2 30" stroke="#0b0b0b" strokeWidth="2" />
      <path d="M1296 464l-6 84" stroke={GRAY} strokeWidth="2" />
      <path d="M1255 436l18-8M1274 436l6-4M1298 454l7-4M1304 462l8-5" stroke={BLUE} strokeWidth="2" />
      <ellipse cx="1319" cy="515" rx="6" ry="7" fill={GRAY} stroke={BLUE} strokeWidth="1" transform="rotate(20 1319 515)" />
      <path d="M1148 532l8-2-6 78h-6z" fill={GRAY} />
      <path d="M1148 532l-4 76M1156 528l-6 78" stroke={BLUE} strokeWidth="3" />
      <path d={details.left} stroke={BLUE} strokeWidth="2" />

      {/* tall column */}
      <path d="M1150 615l202-86-29 379-117 48 19-288z" fill={DARK} />
      <path d="M1323 908l-117 48" stroke="#0b0b0b" />
      {/* rail */}
      <path d="M1110 612l38-12 206-82 6 8-206 88-44 14z" fill={GRAY} />
      <path d="M1110 614l38-14M1152 602l204-83M1152 614l208-86M1110 622l42-12" stroke={BLUE} strokeWidth="2" />
      <path d="M1152 611l206-86" stroke={BLUE} strokeWidth="4" strokeDasharray="9 2" />
      <path d="M1160 602l190-77" stroke="#111" strokeDasharray="2 16" strokeWidth="2" />
      <path d={details.rail} stroke={BLUE} strokeWidth="2" />
      <path d={details.rail2} stroke={BLUE} strokeWidth="2" />
      <path d="M1350 495l2 34M1356 495v26M1351 530l-28 378" stroke={BLUE} strokeWidth="2" />
      <path d="M1353 508l11-2M1356 506l4 8 4-8M1354 520l8 4M1358 516l5 10" stroke={BLUE} strokeWidth="2" />
      <path d="M1334 694l14 6M1338 708l4-18M1336 702l12-10M1346 702l2-8M1333 702l16-2" stroke={BLUE} strokeWidth="2" />

      {/* joint and beam */}
      <path d="M1110 620l42-8 50 40-6 30-40-14-46-6z" fill={GRAY} />
      <path d="M1132 620l20-6 4 22-22 8z" fill={DARK} />
      <path d="M1122 655l46-22 31 30v56l-22-12-50-36z" fill={GRAY} />
      <path d="M1175 657l17-10v22z" fill="#fff" />
      <path d="M1174 637c-8 2-8 14 0 22l20 14" stroke="#111" />
      <path d="M1122 656l46-22M1128 664l68 38M1126 674l26 18 46 24M1128 656l70 44M1154 616v18l-24 10" stroke={BLUE} strokeWidth="2" />
      <path d="M1188 650l6-4v24" stroke={BLUE} strokeWidth="2" />
      <path d={details.joint} stroke={BLUE} strokeWidth="2" />
      <path d={details.beam} stroke={BLUE} strokeWidth="2" />
      <path d={details.side} stroke={BLUE} strokeWidth="2" />
      <path d="M1128 612l-5 54M1136 622v22M1128 674l-5 58" stroke={BLUE} strokeWidth="3" />

      {/* near leg */}
      <path d="M1198 652l28 17-20 286-2-34-23-18 8-189z" fill={GRAY} />
      <path d="M1174 704l14 8v16l-12-8z" fill="#fff" />
      <path d="M1154 616l44 36 28 17-13 181-8 106" stroke={BLUE} strokeWidth="3" />
      <path d="M1198 652l-4 60-13 190M1189 700l-3 90" stroke={BLUE} strokeWidth="2" />
      <path d={details.leg} stroke={BLUE} strokeWidth="2" />
      <path d="M1176 772l18 14M1200 790l28 14M1216 796l6 10M1222 792l-8 14M1208 748l10-3M1208 756l10 2M1214 744l-4 14" stroke={BLUE} strokeWidth="2" />

      {/* near foot */}
      <path d="M1156 914l6-10 14 2 30 20-1 25z" fill={PURPLE} />
      <path d="M1162 888l20 14 24 14v16z" fill={PURPLE} />
      <Rollers pts={[[1160, 916], [1204, 948]]} n={16} w={7} />
      <Rollers pts={[[1164, 894], [1206, 926]]} n={12} w={7} />
      <Rollers pts={[[1168, 888], [1184, 902]]} n={6} w={6} />
      <Rollers pts={[[1182, 884], [1207, 902]]} n={10} w={5} />
      <path d={comb([1184, 890], [1205, 904], 5, 2, 9) + comb([1186, 908], [1205, 922], 5, 2, 9)} stroke={PURPLE} strokeWidth="2" />
      <path d="M1170 916l5 3M1184 928l3 4M1192 938l4 2M1176 922l-3-4M1188 918l4 3" stroke="#e8e9ed" strokeWidth="2" />
      <path d="M1209 880l-2 40-2 38" stroke={BLUE} strokeWidth="3" />
      <Rollers pts={[[1210, 925], [1226, 938]]} n={5} w={7} />

      {/* marks on the column */}
      <Rollers pts={[[1253, 905], [1271, 920]]} n={6} w={8} />
      <Rollers pts={[[1272, 898], [1288, 911]]} n={6} w={8} />
      <Rollers pts={[[1328, 850], [1346, 864]]} n={6} w={8} />
      <Rollers pts={[[1328, 860], [1344, 866]]} n={4} w={8} />
      <Rollers pts={[[1325, 876], [1343, 889]]} n={6} w={8} />
      <g fill={PURPLE}>
        {[
          [1254, 882], [1272, 874], [1294, 888], [1230, 915], [1250, 931], [1302, 884], [1262, 904], [1218, 922], [1236, 910], [1323, 900],
        ].map(([x, y]) => (
          <circle key={x + "-" + y} cx={x} cy={y} r="2" />
        ))}
      </g>
      <g fill="#111" stroke="#555">
        <circle cx="1305" cy="892" r="1" />
        <circle cx="1316" cy="887" r="1" />
        <circle cx="1316" cy="905" r="1" />
        <circle cx="1304" cy="910" r="1" />
      </g>
      <ellipse cx="1293" cy="864" rx="6" ry="11" fill="#1d1720" stroke="#111" transform="rotate(10 1293 864)" />
      <path d="M1295 854c6 2 4 16-3 21" stroke={BLUE} strokeWidth="2" />
      <ellipse cx="1292" cy="865" rx="4" ry="8" fill={PURPLE} transform="rotate(10 1292 865)" />

      {/* leaders */}
      <path d="M1382 375h-25.500l.5 70 3 201M1460 439h-25l-75 207M1420 557h-26l-34 89" stroke="#075a94" />
      <circle cx="1360" cy="646" r="2" fill="#075a94" />
      <g fill="#7a7d80">
        <circle cx="1381" cy="375" r="4" />
        <circle cx="1460" cy="439" r="4" />
        <circle cx="1420" cy="557" r="4" />
      </g>

      {/* orientation triad */}
      <g stroke={PURPLE}>
        <path d="M1808.500 1004V881.500h114" />
        <path d="M1831 942l18-8 16 13-2 19-18 8-16-12zM1831 942l32 24M1849 934l-4 40M1829 962l45-20M1847 954l18-6M1831 942l1-28M1845 974l20 15" />
      </g>
      <g fill={PURPLE} fontSize="12" fontFamily="Noto Sans, sans-serif" textAnchor="middle">
        <text x="1832" y="916">Y</text>
        <text x="1877" y="947">X</text>
        <text x="1868" y="997">Z</text>
      </g>
    </svg>
  );
}

/* ---------- viewport overlays ---------- */

const lens = (
  <>
    <circle cx="6.500" cy="6.500" r="5" fill="#eef7fb" stroke="#3b8db3" strokeWidth="1.500" />
    <path d="M10.500 10.500l5 5" stroke="#a3a6a8" strokeWidth="2" />
  </>
);

const tools: { name: string; art: React.ReactNode; on?: boolean; drop?: boolean }[] = [
  {
    name: "Refit",
    art: (
      <>
        <path d="M.5.5h14v14H.5z" fill="#fff" stroke="#999" />
        <circle cx="8" cy="8" r="4" fill="#e8f4f9" stroke="#5b9dbb" />
        <path d="M11 11l4 4" stroke="#8e9193" strokeWidth="2" />
      </>
    ),
  },
  { name: "Zoom in", art: <>{lens}<path d="M3.500 6.500h6M6.500 3.500v6" stroke="#0c5c85" strokeWidth="2" /></> },
  { name: "Zoom out", art: <>{lens}<path d="M3.500 6.500h6" stroke="#0c5c85" strokeWidth="2" /></> },
  {
    name: "Repaint",
    art: (
      <>
        <path d="M.5.5h15v15H.5z" fill="url(#sky)" stroke="#9ab4bf" />
        <path d="M4 15L15 6v9z" fill="#0e5578" />
        <path d="M1 9c5 0 8-3 10-8" stroke="#fff" strokeWidth="3" />
      </>
    ),
  },
  {
    name: "Rendering",
    drop: true,
    art: (
      <>
        <path d="M5 5L9 1l6 2v6l-4 4H5z" fill="url(#metal)" />
        <path d="M0 12c2-3 6-3 9-1l-4 5H1z" fill="#9b9b9b" />
        <path d="M7 4c2-2 5-1 6 1" stroke="#fff" strokeWidth="2" />
      </>
    ),
  },
  {
    name: "Display style",
    drop: true,
    art: <path d="M1 5l4-4h10v10l-4 4H1zM1 5h10v10M11 5l4-4" fill="#fff" stroke="#0c5c85" strokeWidth="1.500" />,
  },
  {
    name: "Saved orientations",
    drop: true,
    art: (
      <>
        <path d="M4 1h8l4 7-4 6H4L0 8z" fill="#c4e7f4" />
        <path d="M4 1h8l4 7-4 6H4L0 8zM0 8h16M8 1v13" stroke="#5aabc9" />
        <path d="M12 1l4 7h-5z" fill="#1b7ba5" />
        <path d="M10.500 9.500h4v6h-4z" fill="#fff" stroke="#666" />
      </>
    ),
  },
  {
    name: "View manager",
    art: (
      <>
        <path d="M1 1h12v14H1zM1 4h12M5 1v14M1 8h12M1 12h12" stroke="#b0b2b4" />
        <path d="M5 9h11v7H5z" fill="#999c9e" />
        <circle cx="11" cy="12" r="2" fill="#ddd" />
      </>
    ),
  },
  {
    name: "Perspective",
    art: (
      <>
        <path d="M0 5l8-4h7v11l-5 4-10-3z" fill="#dddfe1" stroke="#b0b2b4" />
        <path d="M10 6v10M0 5l10 1 5-5M5 5v9M0 9l10 2" stroke="#b0b2b4" />
      </>
    ),
  },
  {
    name: "Section",
    drop: true,
    art: (
      <>
        <path d="M1 5l4-4h10L3 15H1z" fill="#d5eef7" stroke="#8cc3d8" />
        <path d="M0 15L15 0" stroke="#0c5c85" strokeWidth="1.500" />
        <path d="M6 13h9M9 10h6M12 7h3M5 15h8" stroke="#999" strokeDasharray="1 1" />
      </>
    ),
  },
  {
    name: "Datum display",
    drop: true,
    art: (
      <>
        <path d="M0 1l4 4M4 1L0 5" stroke="#8a6420" />
        <path d="M12 0L3 16" stroke="#8a6420" strokeDasharray="5 2" strokeWidth="1.500" />
        <path d="M10 7v6h6M10 13l-3 3M9 8h2M14 12v2" stroke="#8a6420" strokeWidth="1.500" />
      </>
    ),
  },
  {
    name: "Annotation display",
    on: true,
    art: (
      <>
        <path d="M.5.5h10v6H.5z" fill="#fdf7d2" stroke="#888" />
        <path d="M11 3h3v4M12 6l2 2 2-2" stroke="#333" />
        <ellipse cx="11" cy="12" rx="5" ry="3" fill="#fff" stroke="#333" />
        <circle cx="11" cy="12" r="2" fill="#333" />
      </>
    ),
  },
  {
    name: "Simulation display",
    on: true,
    art: (
      <>
        <path d="M3 3l5 5h5M8 8l-5 6" stroke="#333" />
        <circle cx="3" cy="3" r="3" fill="#3c9b5c" />
        <circle cx="13" cy="8" r="3" fill="#e06a6a" />
        <circle cx="3" cy="13" r="3" fill="#1b7ba5" />
      </>
    ),
  },
  {
    name: "Load display",
    on: true,
    art: (
      <>
        <path d="M2 0h2v12H2z" fill="#8a2020" />
        <circle cx="3" cy="13" r="3" fill="#c23030" />
        <path d="M6 1v9M7 1l8 9M7 5l5 5" stroke="#2f85ad" strokeWidth="1.500" />
        <ellipse cx="11" cy="13" rx="4" ry="2" fill="#fff" stroke="#333" />
        <circle cx="11" cy="13" r="2" fill="#333" />
      </>
    ),
  },
  {
    name: "Mesh display",
    on: true,
    art: (
      <>
        <path d="M0 1h15v8H0zM0 4h15M4 1v8M8 1v14M12 1v8M2 9l6 6" stroke="#b0b2b4" strokeDasharray="2 1" />
        <path d="M7 9l8 6" stroke="#999" />
        <ellipse cx="12" cy="12" rx="3" ry="2" stroke="#999" />
      </>
    ),
  },
];

function ViewToolbar() {
  return (
    <div
      role="toolbar"
      className="absolute top-[7px] left-[627px] flex h-[32px] items-center gap-[3px] border-2 border-[#a3a7a9] bg-[#f9fafc] pr-[3px] pl-0.5"
    >
      {tools.map((t) => (
        <button
          key={t.name}
          aria-label={t.name}
          className={
            "relative flex h-[23px] w-[23px] items-center justify-center border " +
            (t.on ? "border-[#b0b2b4] bg-[#dfe1e4]" : "border-transparent")
          }
        >
          <Icon>{t.art}</Icon>
          {t.drop && (
            <span className="absolute right-0 bottom-0 border-r-4 border-t-4 border-r-[#444] border-t-transparent" />
          )}
        </button>
      ))}
    </div>
  );
}

const Collapse = () => (
  <Icon w={13} h={11}>
    <rect width="13" height="11" rx="3" fill="#6e7074" />
    <path d="M3 5.500h7" stroke="#fff" strokeWidth="2" />
  </Icon>
);

const callouts = [
  { title: "VON_MISES_STRES...tructureStudy 1", name: "VON_MISES_STRESS", unit: "MPa", pos: "left-[1111px] top-[200px] w-[229px]" },
  { title: "DISPLACEMENT_...uctureStudy 1", name: "DISPLACEMENT", unit: "mm", pos: "left-[1189px] top-[264px] w-[209px]" },
  { title: "1ST_PRINCIPAL_STRE...2_StructureStudy 1", name: "1ST_PRINCIPAL_STRESS", unit: "MPa", pos: "left-[1149px] top-[382px] w-[248px]" },
];

function Callout({ title, name, unit, pos }: any) {
  return (
    <div className={"absolute border border-[#bfc1c3] bg-white text-[11px] leading-5 whitespace-nowrap text-[#55585a] outline outline-white " + pos}>
      <div className="relative flex h-[22px] items-center border-b border-[#c9cbcd] bg-[#f1f1f2]">
        <svg className="absolute inset-0 h-full w-full" aria-hidden="true">
          <rect width="100%" height="100%" fill="url(#hatch)" />
        </svg>
        <span className="relative pl-[3px]">{title}</span>
        <button aria-label="Collapse" className="relative ml-auto pr-[5px]">
          <Collapse />
        </button>
      </div>
      <div className="flex justify-between">
        <span className="px-1">{name}</span>
        <span className="flex-1 border-l border-[#e6e6e6] bg-[#fafafa] text-center font-bold text-[#707274]">Not Calculated</span>
        <span className="border-l border-[#e6e6e6] bg-[#fafafa] px-[3px] text-[#7c7e80]">{unit}</span>
      </div>
    </div>
  );
}

/* ---------- process manager ---------- */

const CheckBadge = () => (
  <Icon s={12}>
    <path d="M0 0h12v12H0z" fill="#2f9160" />
    <path d="M2 6l3 3 5-6" stroke="#fff" strokeWidth="1.500" />
  </Icon>
);

const StudyBig = ({ mesh }: { mesh?: boolean }) => (
  <Icon w={33} h={34}>
    <path d="M2 23L6 9c8 4 17 4 26 1l-6 14c-8-2-15-3-24-1z" fill="#f3f4f5" stroke="#8b8d8f" />
    <path d="M16 0v18" stroke="#2f87ae" strokeWidth="2" />
    <path d="M13 16h6l-3 5z" fill="#07547c" />
    <path d="M1 31l8-8M6 33l9-9M13 33l9-9" stroke="#5fa9c8" strokeWidth="2" />
    {mesh ? (
      <>
        <path d="M18 21h14v12H18z" fill="#d6f0fa" stroke="#2b88b2" />
        <path d="M18 24h14M18 27h14M18 30h14M21 21v12M24 21v12M27 21v12M30 21v12" stroke="#5fb0d2" />
      </>
    ) : (
      <>
        <path d="M28 18l4 15" stroke="#444" strokeWidth="2" />
        <path d="M18 20l11-2 1 6-10 3z" fill="#4bc23c" stroke="#278a22" />
      </>
    )}
  </Icon>
);

const processes = [
  {
    title: "StructureStudy 1 - FURNACE_GANTRY_R1.ASM | Run",
    info: "In progress | Tasks done: 1/2 (50%) | Started: 07-May-21 02:20:17 PM | Elapsed time: 0h 14m 21s",
    progress: 50,
    tasks: [
      { ok: true, name: "Mesh", state: "Done | 100% completed" },
      { ok: false, name: "Solve", state: "Failed | 99% completed" },
    ],
  },
  {
    title: "StructureStudy 1 - FURNACE_GANTRY_R1.ASM | Mesh",
    info: "Done | Tasks done: 1/1 (100%) | Ended: 07-May-21 12:40:43 PM | Elapsed time: 0h 7m 32s",
    tasks: [{ ok: true, name: "Mesh", state: "Done | 100% completed" }],
  },
];

function ProcessManager() {
  return (
    <div
      role="dialog"
      aria-labelledby="pm-title"
      className="absolute top-[121px] left-[182px] flex h-[451px] w-[666px] flex-col border-2 border-white bg-[#eff0f2] text-[11px] text-[#4a4c4e] shadow-[2px_3px_10px_rgba(0,0,0,0.45)]"
    >
      <div className="relative flex h-[30px] shrink-0 items-center justify-center bg-[#e6e7e9]">
        <h2 id="pm-title" className="text-[#989b9d]">Creo Process Manager</h2>
        <button aria-label="Close dialog" className="absolute right-2.5">
          <Icon s={8}>
            <path d="M1 1l6 6M7 1L1 7" stroke="#8c8e90" strokeWidth="2" />
          </Icon>
        </button>
      </div>
      <p className="mt-3 px-2.5 leading-5">2 Processes in session</p>
      <ul className="mx-2.5 mb-4 flex-1 border border-[#adb0b2] bg-white">
        {processes.map((p, i) => (
          <li key={p.title} className={"flex px-2 pt-3 " + (i === 0 ? "h-[141px] border-b border-[#c8caca]" : "")}>
            <div className="flex w-[79px] shrink-0">
              <span className={"w-[21px] " + (p.progress ? "pt-[18px]" : "pt-[13px]")}>
                <Collapse />
              </span>
              <span className="w-[19px] pt-3">{!p.progress && <CheckBadge />}</span>
              <span className={p.progress ? "pt-1.5" : ""}>
                <StudyBig mesh={!p.progress} />
              </span>
            </div>
            <div className="min-w-0 flex-1 leading-4">
              <h3 className="pl-0.5 font-bold">{p.title}</h3>
              {p.progress && (
                <div className="mt-[5px] mr-[26px] h-[5px] bg-[#e2e3e4]">
                  <div className="h-full bg-[#76cbf8]" style={{ width: p.progress + "%" }} />
                </div>
              )}
              <p className={"pl-0.5 whitespace-nowrap " + (p.progress ? "mt-[5px]" : "mt-1.5")}>{p.info}</p>
              <ul className="mt-3 flex flex-col gap-3.5">
                {p.tasks.map((t) => (
                  <li key={t.name} className="flex items-center">
                    {t.ok ? <CheckBadge /> : <ErrorIcon />}
                    <span className="ml-[7px]">{t.name}</span>
                    <span className="ml-[5px]">| {t.state}</span>
                  </li>
                ))}
              </ul>
            </div>
          </li>
        ))}
      </ul>
      <div className="flex shrink-0 justify-end border-t border-[#c8cacc] px-2.5 pt-2.5 pb-2">
        <button className="h-[24px] w-[49px] border border-[#adb0b2] bg-[#f8f9fa]">Close</button>
      </div>
    </div>
  );
}

/* ---------- bottom bars ---------- */

function StatusBar() {
  return (
    <footer className="flex h-[38px] shrink-0 items-center border-t border-[#aab9bd] bg-[#f8faf9] pl-1.5 text-[11px] text-[#4a4c4e]">
      <button aria-label="Navigator" className="flex h-6 w-[22px] items-center justify-center border border-[#adb0b2] bg-[#dfe1e2]">
        <Icon>
          <path d="M.5.5h15v13H.5zM.5 4.500h15" fill="#fff" stroke="#777" />
          <path d="M5 5v9" stroke="#1c6d96" strokeWidth="2" />
          <ellipse cx="11" cy="12" rx="4" ry="3" fill="#fff" stroke="#444" />
          <circle cx="11" cy="12" r="1" fill="#444" />
        </Icon>
      </button>
      <button aria-label="Browser" className="ml-[7px]">
        <Icon>
          <circle cx="8" cy="8" r="7" fill="url(#sky)" stroke="#2b88b2" />
          <path d="M4 5l4-1-1 4-2 3zM10 8l3-1-1 4-3 1z" fill="#1c6d96" />
          <path d="M1 14C3 8 9 2 15 1c1 1-2 5-3 6" stroke="#777" />
        </Icon>
      </button>
      <button aria-label="Full screen" className="ml-2.5">
        <Icon>
          <path d="M.5.5h15v15H.5z" fill="url(#doc)" stroke="#1c6d96" />
        </Icon>
      </button>
      <div className="ml-3 h-6 w-px bg-[#adb0b2]" />
      <p className="flex items-center gap-1 pb-1 pl-1.5">
        <span className="h-[5px] w-[5px] rounded-full bg-[#0c5c85]" />
        FURNACE_GANTRY_R1_bkp has been saved.
      </p>
      <div className="ml-auto flex h-full items-center pr-[18px]">
        <div className="flex h-[30px] w-[42px] items-center gap-1 border-x border-[#adb0b2] pl-1">
          <Icon w={15} h={16}>
            <path d="M2 4l5-3 6 3v5" stroke="#9da2a4" strokeWidth="3" />
            <path d="M1 11l6 4 6-4V8" stroke="#56b33a" strokeWidth="3" />
          </Icon>
          <span className="pb-1 text-[9px] leading-3">1</span>
        </div>
        <div className="ml-1 flex h-[30px] items-center border-x border-[#adb0b2] px-0.5">
          <div className="flex h-6 border border-[#c0c3c5] bg-white">
            <button aria-label="Find" className="flex w-[27px] items-center justify-center border-r border-[#c0c3c5]">
              <Icon w={17} h={15}>
                <path d="M2 3h5v12H0V9zM10 3h5l2 6v6h-7z" fill="#4b4d4f" />
                <path d="M3 0h3v3H3zM11 0h3v3h-3zM7 6h3v4H7z" fill="#222" />
                <path d="M3 6v8M13 6v8" stroke="#aaa" />
              </Icon>
            </button>
            <button aria-label="Find options" className="flex w-[13px] items-center justify-center">
              <Caret className="w-[7px]" />
            </button>
          </div>
        </div>
        <label className="relative ml-[90px] flex h-[23px] w-[165px] border border-[#adb0b2] bg-white">
          <select aria-label="Selection filter" className="w-full appearance-none bg-transparent pl-[7px] leading-5 outline-none">
            <option>Geometry and Simulation</option>
          </select>
          <span className="pointer-events-none absolute inset-y-0 right-0 flex w-[15px] items-center justify-center border-l border-[#adb0b2]">
            <Caret className="w-[7px]" />
          </span>
        </label>
      </div>
    </footer>
  );
}

const TaskButton = ({ name, children, open, active }: any) => (
  <button
    aria-label={name}
    className={"relative flex h-10 w-[49px] items-center justify-center " + (active ? "bg-[#51646c]" : "")}
  >
    {children}
    {open && (
      <span className={"absolute bottom-0 h-0.5 bg-[#76b9ed] " + (active ? "inset-x-0" : "inset-x-1")} />
    )}
  </button>
);

function Taskbar() {
  return (
    <div className="flex h-10 shrink-0 items-center bg-linear-to-r from-[#21373f] via-[#213640] to-[#1c2744] text-white">
      <button aria-label="Start" className="flex w-12 justify-center">
        <Icon s={17}>
          <path d="M0 2l7-1v7H0zM8 1l9-1v8H8zM0 9h7v7l-7-1zM8 9h9v8l-9-1z" fill="#fff" />
        </Icon>
      </button>
      <label className="flex h-full w-[343px] items-center gap-[11px] border border-[#b9bcbe] bg-[#f1f1f1] pl-3">
        <Icon s={16}>
          <circle cx="10" cy="6" r="5" stroke="#222" />
          <path d="M6 10l-5 6" stroke="#222" />
        </Icon>
        <input
          aria-label="Search"
          placeholder="Type here to search"
          className="w-full bg-transparent text-[14px] outline-none placeholder:text-[#3a3c3e]"
        />
      </label>
      <TaskButton name="Cortana">
        <Icon s={16}>
          <circle cx="8" cy="8" r="6.500" stroke="#fff" strokeWidth="2" />
        </Icon>
      </TaskButton>
      <TaskButton name="Task view">
        <Icon w={17} h={16}>
          <path d="M.5 3V.5h10V3M.5 5.500h10v5H.5zM.5 13v2.500h10V13M13.500 0v3M13.500 9v7" stroke="#fff" />
          <path d="M12 4h4v3h-4z" fill="#fff" />
        </Icon>
      </TaskButton>
      <TaskButton name="Edge">
        <Icon s={24}>
          <circle cx="12" cy="12" r="12" fill="url(#edge)" />
          <path d="M0 11C1-2 23-4 24 10c0 5-5 7-9 5 2-4-1-8-6-8-5 0-8 3-9 6z" fill="url(#edgeTop)" />
          <path d="M9 9c-4 5 1 13 9 11l4-2c-3 2-9 1-10-4-.5-2 1-3 1-4 0-2-3-2-4-1z" fill="#21373f" opacity=".55" />
        </Icon>
      </TaskButton>
      <TaskButton name="File Explorer" open>
        <Icon w={22} h={19}>
          <path d="M0 0h8l2 3h12v15H0z" fill="#e9b23c" />
          <path d="M0 4h22v14H0z" fill="#fbd667" />
          <path d="M4 18v-8h14v8h-4v-4H8v4z" fill="#3d8fce" />
        </Icon>
      </TaskButton>
      <TaskButton name="Mail">
        <Icon s={24}>
          <path d="M0 9l12-8 12 8v14H0z" fill="#0f5ea6" />
          <path d="M2 9h20L12 18z" fill="#fff" />
          <path d="M0 9l12 9 12-9v14H0z" fill="#2b9fe0" />
          <path d="M0 23l12-9 12 9z" fill="#4fc1f0" />
        </Icon>
      </TaskButton>
      <TaskButton name="Teams" open>
        <Icon s={24}>
          <circle cx="13" cy="4" r="4" fill="#7b83eb" />
          <circle cx="20" cy="5" r="3" fill="#5059c9" />
          <path d="M15 9h9v7c0 4-6 5-8 2z" fill="#5059c9" />
          <path d="M7 9h12v8c0 7-12 7-12 0z" fill="#7b83eb" />
          <path d="M0 6h12v12H0z" fill="#4b53bc" />
          <path d="M3 9h6M6 9v7" stroke="#fff" strokeWidth="2" />
          <circle cx="19" cy="19" r="5" fill="#8dc63f" stroke="#fff" />
          <path d="M17 19l2 2 3-4" stroke="#fff" />
        </Icon>
      </TaskButton>
      <TaskButton name="Creo" open>
        <Icon s={24}>
          <path d="M.5.5h23v23H.5z" fill="#fff" stroke="#8c9093" />
          <path d="M4 4h4v15H4zM4 17h15v2H4z" fill="#2c5568" />
          <path d="M8 4h12v12H8z" fill="#1590cf" stroke="#fff" />
        </Icon>
      </TaskButton>
      <TaskButton name="Snip" open active>
        <Icon s={24}>
          <path d="M13 3c7 0 8 12 2 15" stroke="#cf4a20" strokeWidth="4" />
          <path d="M11 2C6 2 4 6 5 10" stroke="#cf4a20" strokeWidth="3" />
          <path d="M12 0l2 16-3-1z" fill="#e8ecee" />
          <path d="M9 4l4 12-2 1z" fill="#c5cdd2" />
          <circle cx="7" cy="20" r="2" stroke="#1b8ad3" strokeWidth="2" />
          <circle cx="16" cy="21" r="2" stroke="#1b8ad3" strokeWidth="2" />
          <path d="M9 18l3-3 3 4" stroke="#1b8ad3" strokeWidth="2" />
        </Icon>
      </TaskButton>
      <div className="ml-auto flex items-center">
        <Icon s={24} className="mr-2">
          <circle cx="11" cy="11" r="10" fill="#1b98d5" stroke="#fff" />
          <path d="M8 8c0-4 7-4 7 0 0 3-4 3-4 6M11 15v3" stroke="#fff" strokeWidth="2" />
          <circle cx="19" cy="16" r="5" fill="#eda528" />
          <path d="M19 13v6" stroke="#fff" />
        </Icon>
        <Icon w={12} h={8} className="mr-3">
          <path d="M0 7l6-6 6 6" stroke="#fff" />
        </Icon>
        <Icon w={11} h={16} className="mr-3">
          <path d="M3 0h5v10H3z" fill="#fff" />
          <path d="M.5 8v3h10V8M5.500 11v4M2 15.500h7" stroke="#fff" />
        </Icon>
        <Icon w={16} h={12} className="mr-2.5">
          <path d="M5 3h10v7H3V7" stroke="#fff" />
          <path d="M7 5h7v4H7z" fill="#fff" />
          <path d="M1 1v3h3V1M2.500 4v3" stroke="#fff" />
        </Icon>
        <Icon w={13} h={13} className="mr-2">
          <path d="M1 12C1 6 6 1 12 1M4 12c0-4 4-8 8-8M7 12c0-3 2-5 5-5" stroke="#c9cfd6" />
          <circle cx="11" cy="11" r="2" fill="#fff" />
        </Icon>
        <Icon w={17} h={14} className="mr-2.5">
          <path d="M1 5h2l4-4v12L3 9H1zM9 5c1 1 1 3 0 4M11 3c3 2 3 6 0 8M13 1c4 3 4 9 0 12" stroke="#fff" />
        </Icon>
        <div className="mr-[21px] w-[48px] text-center text-[11px] leading-[18px] whitespace-nowrap">
          <div>2:42 PM</div>
          <div>5/7/2021</div>
        </div>
        <button aria-label="Notifications" className="relative mr-[10px] h-7 w-[26px]">
          <Icon w={17} h={17} className="absolute top-1.5 left-0">
            <path d="M0 0h17v12H9l-4 4v-4H0z" fill="#fff" />
            <path d="M3 3h11M3 6h11M3 9h8" stroke="#1c2744" />
          </Icon>
          <span className="absolute right-0.5 bottom-0 flex h-4 w-4 items-center justify-center rounded-full border border-[#8c949c] bg-[#3c434b] text-[11px] leading-none font-bold">
            4
          </span>
        </button>
        <div className="h-10 w-px bg-[#66717f]" />
        <div className="w-1" />
      </div>
    </div>
  );
}

export default function App() {
  return (
    <div className="flex h-screen flex-col overflow-hidden bg-[#e8e9ed] font-['Noto_Sans','Open_Sans',sans-serif]">
      <Defs />
      <TitleBar />
      <TabBar />
      <Ribbon />
      <div className="flex min-h-0 flex-1">
        <Sidebar />
        <main className="relative min-w-0 flex-1 overflow-hidden">
          <Scene />
          {callouts.map((c) => (
            <Callout key={c.name} {...c} />
          ))}
          <ViewToolbar />
          <ProcessManager />
        </main>
      </div>
      <StatusBar />
      <Taskbar />
    </div>
  );
}
